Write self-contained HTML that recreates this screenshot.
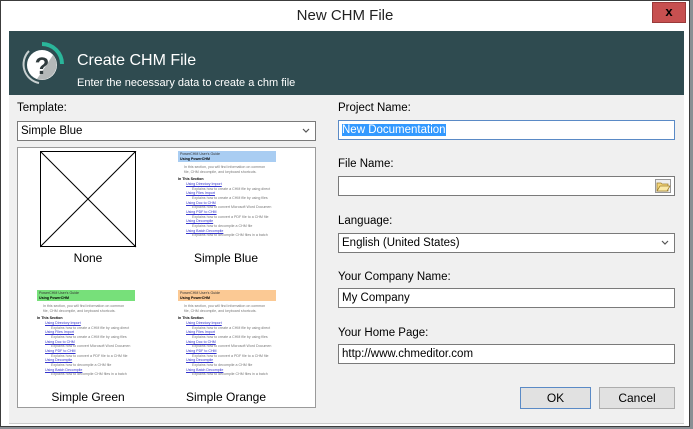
<!DOCTYPE html>
<html><head><meta charset="utf-8"><style>
*{margin:0;padding:0;box-sizing:border-box}
body{width:693px;height:429px;background:#8a8f94;position:relative;overflow:hidden;font-family:"Liberation Sans",sans-serif;font-size:11.5px;color:#000}
.win{position:absolute;left:0;top:0;width:690px;height:427px;background:#fff;border:1px solid #3c3c3c}
.title{position:absolute;left:0;top:6px;width:688px;text-align:center;font-size:15px;color:#222}
.close{position:absolute;left:651px;top:1px;width:34px;height:21px;background:#c75050;border:1px solid #9a3a3a;color:#000;font-weight:bold;text-align:center;font-size:13px;line-height:18px}
.head{position:absolute;left:8px;top:30px;width:675px;height:64px;background:#2f4b50}
.h1{position:absolute;left:68px;top:21px;color:#fff;font-size:16px}
.h2{position:absolute;left:68px;top:46px;color:#fff;font-size:11px}
.client{position:absolute;left:8px;top:94px;width:675px;height:328px;background:#f0f0f0}
.bl{position:absolute;left:8px;top:422px;width:675px;height:1px;background:#ccc}
.lbl{position:absolute;font-size:11.5px}
.box{position:absolute;background:#fff;border:1px solid #7a7a7a;font-size:11.5px;padding:3px 0 0 3px;height:20px}
.arrow{position:absolute;right:5px;top:6px}
.list{position:absolute;left:17px;top:147px;width:299px;height:261px;background:#fff;border:1px solid #9a9a9a}
.cap{position:absolute;font-size:12px;text-align:center;width:140px}
.th{position:absolute;width:98px;height:98px;font-size:3.6px;color:#777;line-height:1.3}
.th .bar{height:11px;padding:1px 2px;color:#333}
.th b{display:block;color:#000}
.th .l{color:#33c;text-decoration:underline;margin-left:8px}
.th .d{margin-left:14px}
.btn{position:absolute;height:22px;border:1px solid #adadad;background:#e1e1e1;text-align:center;line-height:20px;font-size:12px}
</style></head><body>
<div class="win">
<div class="title">New CHM File</div>
<div class="close">x</div>
<div class="head">
<svg style="position:absolute;left:8px;top:8px" width="50" height="50" viewBox="0 0 50 50">
<path d="M25 5 A20 20 0 0 1 45 25" stroke="#2ab59a" stroke-width="4" fill="none"/>
<path d="M12 12 A19 19 0 0 0 22 44" stroke="#c8d0d0" stroke-width="2" fill="none"/>
<circle cx="25" cy="26" r="15" fill="#fff"/>
<path d="M36 16 A15 15 0 0 1 20 40 L36 16Z" fill="#b4b8b8"/>
<text x="25" y="35" text-anchor="middle" font-family="Liberation Sans" font-weight="bold" font-size="24" fill="#2f3a3c">?</text>
</svg>
<div class="h1">Create CHM File</div>
<div class="h2">Enter the necessary data to create a chm file</div>
</div>
<div class="client"></div>
<div class="bl"></div>
</div>
<div class="lbl" style="left:17px;top:102px">Template:</div>
<div class="box" style="left:17px;top:121px;width:299px">Simple Blue<svg class="arrow" width="8" height="6"><path d="M1 1l3 3 3-3" stroke="#555" fill="none" stroke-width="1.2"/></svg></div>
<div class="list">
<svg style="position:absolute;left:22px;top:3px" width="97" height="97"><rect x="0.5" y="0.5" width="95" height="95" fill="none" stroke="#000"/><path d="M0 0L96 96M96 0L0 96" stroke="#000"/></svg>
<div class="cap" style="left:0;top:103px">None</div>
<div class="th" style="left:160px;top:3px"><div class="bar" style="background:#a9cdf2">PowerCHM User's Guide<b>Using PowerCHM</b></div><div style="margin:3px 6px">In this section, you will find information on common file, CHM decompile, and keyboard shortcuts.</div><b>In This Section</b><div class="l">Using Directory Import</div><div class="d">Explains how to create a CHM file by using direct</div><div class="l">Using Files Import</div><div class="d">Explains how to create a CHM file by using files</div><div class="l">Using Doc to CHM</div><div class="d">Explains how to convert Microsoft Word Documen</div><div class="l">Using PDF to CHM</div><div class="d">Explains how to convert a PDF file to a CHM file</div><div class="l">Using Decompile</div><div class="d">Explains how to decompile a CHM file</div><div class="l">Using Batch Decompile</div><div class="d">Explains how to decompile CHM files in a batch</div></div>
<div class="cap" style="left:138px;top:103px">Simple Blue</div>
<div class="th" style="left:19px;top:142px"><div class="bar" style="background:#77e07a">PowerCHM User's Guide<b>Using PowerCHM</b></div><div style="margin:3px 6px">In this section, you will find information on common file, CHM decompile, and keyboard shortcuts.</div><b>In This Section</b><div class="l">Using Directory Import</div><div class="d">Explains how to create a CHM file by using direct</div><div class="l">Using Files Import</div><div class="d">Explains how to create a CHM file by using files</div><div class="l">Using Doc to CHM</div><div class="d">Explains how to convert Microsoft Word Documen</div><div class="l">Using PDF to CHM</div><div class="d">Explains how to convert a PDF file to a CHM file</div><div class="l">Using Decompile</div><div class="d">Explains how to decompile a CHM file</div><div class="l">Using Batch Decompile</div><div class="d">Explains how to decompile CHM files in a batch</div></div>
<div class="cap" style="left:0;top:242px">Simple Green</div>
<div class="th" style="left:160px;top:142px"><div class="bar" style="background:#fbc994">PowerCHM User's Guide<b>Using PowerCHM</b></div><div style="margin:3px 6px">In this section, you will find information on common file, CHM decompile, and keyboard shortcuts.</div><b>In This Section</b><div class="l">Using Directory Import</div><div class="d">Explains how to create a CHM file by using direct</div><div class="l">Using Files Import</div><div class="d">Explains how to create a CHM file by using files</div><div class="l">Using Doc to CHM</div><div class="d">Explains how to convert Microsoft Word Documen</div><div class="l">Using PDF to CHM</div><div class="d">Explains how to convert a PDF file to a CHM file</div><div class="l">Using Decompile</div><div class="d">Explains how to decompile a CHM file</div><div class="l">Using Batch Decompile</div><div class="d">Explains how to decompile CHM files in a batch</div></div>
<div class="cap" style="left:138px;top:242px">Simple Orange</div>
</div>

<div class="lbl" style="left:338px;top:102px">Project Name:</div>
<div class="box" style="left:338px;top:120px;width:337px;border-color:#5a8ac6"><span style="background:#3399ff;color:#fff">New Documentation</span></div>
<div class="lbl" style="left:338px;top:158px">File Name:</div>
<div class="box" style="left:338px;top:176px;width:337px">
<svg style="position:absolute;right:3px;top:2px" width="16" height="14"><rect x="0.5" y="0.5" width="15" height="13" fill="#eee" stroke="#999"/><path d="M2 4h4l1 1h6v7H2z" fill="#f5d77a" stroke="#a08030" stroke-width=".8"/><path d="M2 12l3-5h10l-3 5z" fill="#fbe9a6" stroke="#a08030" stroke-width=".8"/></svg></div>
<div class="lbl" style="left:338px;top:215px">Language:</div>
<div class="box" style="left:338px;top:233px;width:337px">English (United States)<svg class="arrow" width="8" height="6"><path d="M1 1l3 3 3-3" stroke="#555" fill="none" stroke-width="1.2"/></svg></div>
<div class="lbl" style="left:338px;top:271px">Your Company Name:</div>
<div class="box" style="left:338px;top:288px;width:337px">My Company</div>
<div class="lbl" style="left:338px;top:327px">Your Home Page:</div>
<div class="box" style="left:338px;top:344px;width:337px">http://www.chmeditor.com</div>
<div class="btn" style="left:520px;top:387px;width:71px;border-color:#5a8ac6">OK</div>
<div class="btn" style="left:599px;top:387px;width:76px">Cancel</div>
</body></html>
